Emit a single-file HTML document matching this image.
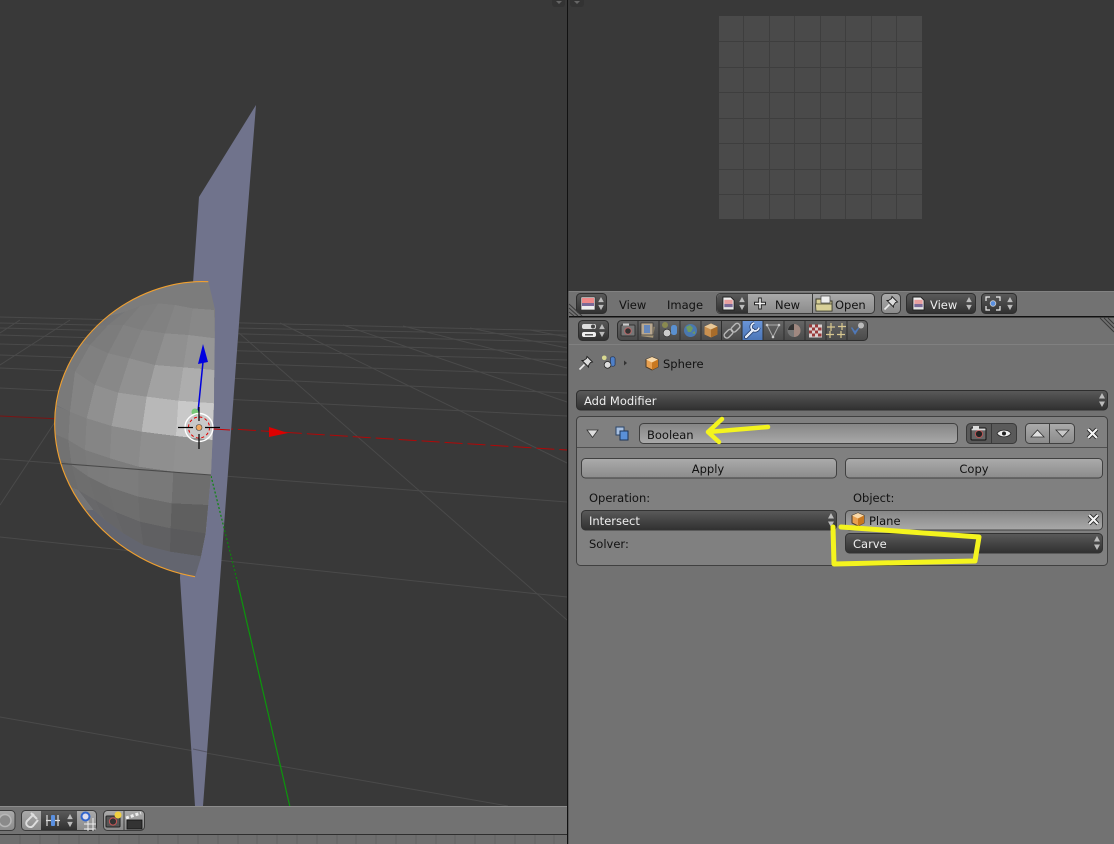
<!DOCTYPE html>
<html><head><meta charset="utf-8"><style>
html,body{margin:0;padding:0;background:#727272;overflow:hidden}
svg{display:block}
text{font-family:"DejaVu Sans","Liberation Sans",sans-serif;font-size:11.5px;fill:#111}
.w{fill:#eee}
</style></head><body>
<svg width="1114" height="844" viewBox="0 0 1114 844" xmlns="http://www.w3.org/2000/svg">
<defs>
<linearGradient id="dk" x1="0" y1="0" x2="0" y2="1"><stop offset="0" stop-color="#5a5a5a"/><stop offset="1" stop-color="#303030"/></linearGradient>
<linearGradient id="lt" x1="0" y1="0" x2="0" y2="1"><stop offset="0" stop-color="#ababab"/><stop offset="1" stop-color="#8b8b8b"/></linearGradient>
<linearGradient id="fld" x1="0" y1="0" x2="0" y2="1"><stop offset="0" stop-color="#858585"/><stop offset="1" stop-color="#a9a9a9"/></linearGradient>
<linearGradient id="tab" x1="0" y1="0" x2="0" y2="1"><stop offset="0" stop-color="#666666"/><stop offset="1" stop-color="#4a4a4a"/></linearGradient>
<linearGradient id="blu" x1="0" y1="0" x2="0" y2="1"><stop offset="0" stop-color="#6a95d8"/><stop offset="1" stop-color="#4b76b8"/></linearGradient>
<radialGradient id="sph" gradientUnits="userSpaceOnUse" cx="520" cy="470" r="480"><stop offset="0" stop-color="#8c8c8c"/><stop offset=".75" stop-color="#7e7e7e"/><stop offset="1" stop-color="#707174"/></radialGradient>
<clipPath id="sc"><path d="M505 35C280 25 44 210 44 460C44 680 230 880 465 920L482 865 497 790 513 615 522 400 525 120Z"/></clipPath>
<symbol id="ud" viewBox="0 0 8 16"><path d="M4 1L7 6.5H1Z M4 15L7 9.5H1Z" fill="#bbb"/></symbol>
<symbol id="img" viewBox="0 0 14 16"><path d="M1 1H9.5L13 4.5V15H1Z" fill="#eee" stroke="#222"/><rect x="2.5" y="4" width="9" height="4.5" fill="#e8a0a0"/><rect x="2.5" y="8.5" width="9" height="3.5" fill="#7a6a98"/><rect x="2.5" y="12" width="9" height="1.5" fill="#ddd"/></symbol>
<symbol id="cube" viewBox="0 0 14 15"><path d="M7 1L13 3.5V11L7 14 1 11V3.5Z" fill="#e8a050" stroke="#4a3a28"/><path d="M7 6.5L1 3.5 7 1 13 3.5Z" fill="#f8d8a8"/><path d="M7 6.5V14L13 11V3.5Z" fill="#c87820"/></symbol>
<symbol id="pin" viewBox="0 0 16 16"><path d="M9 1.5L14.5 7 12.5 7.5 10.5 10.5 10.5 12 4 5.5 5.5 5.5 8.5 3.5Z" fill="#ddd" stroke="#222" stroke-width=".9"/><path d="M6.5 9.5L1.5 14.5" stroke="#eee" stroke-width="1.6"/></symbol>
<symbol id="obd" viewBox="0 0 16 16"><circle cx="3.5" cy="3.5" r="2.5" fill="#d8d890"/><rect x="10" y="2.5" width="5" height="10" rx="2" fill="#4f80c8" stroke="#1c2c4c" stroke-width=".7"/><circle cx="7" cy="11" r="3.6" fill="#ddd" stroke="#222" stroke-width=".8"/></symbol>
<symbol id="x" viewBox="0 0 12 12"><path d="M2 2L10 10M10 2L2 10" stroke="#222" stroke-width="3.6"/><path d="M2 2L10 10M10 2L2 10" stroke="#f4f4f4" stroke-width="2"/></symbol>
</defs>

<rect width="1114" height="844" fill="#727272"/>
<!-- left viewport -->
<rect x="0" y="0" width="567" height="806" fill="#393939"/>
<g stroke="#4a4a4a" stroke-width="1" fill="none">
<path d="M0 317L567 331M0 323L567 335M0 328L567 342M0 335L567 352M0 344L567 360M0 355L567 375M0 368L567 393M0 388L567 416M0 459L567 502M0 537L567 597M0 717L508 806"/>
<path d="M239 333L567 620M280 323L567 463M343 325L567 402M403 326L567 368M470 328L567 348M530 330L567 337M0 365L70 320M0 505L55 422M0 333L20 320"/>
</g>
<path d="M0 416L60 419" stroke="#7a1414" stroke-width="1" fill="none"/>
<path d="M215 428L567 450" stroke="#b00808" stroke-width="1" stroke-dasharray="18 5" fill="none"/>
<path d="M269 427L288 433 269 437Z" fill="#dd0000"/>
<path d="M237 580L290 807" stroke="#0c960c" stroke-width="1.2" fill="none"/>
<path d="M256 105L199 197 193 283 180 578 195 806 203 806 220 580 243 270Z" fill="#70738c"/>
<path d="M193 749L207 752" stroke="#555566" stroke-width="1" fill="none"/>
<path d="M211 476L237 580" stroke="#0c860c" stroke-width="1.2" stroke-dasharray="2 2" fill="none"/>

<!-- sphere -->
<g transform="translate(40 270) scale(.33333)">
<g clip-path="url(#sc)" shape-rendering="crispEdges">
<rect x="30" y="20" width="510" height="920" fill="url(#sph)"/>
<path d="M525 30L522 120 458 115 405 105 355 100 300 108 255 125 200 140 330 40Z" fill="#7c7c7c"/>
<path d="M522 120L525 205 445 195 458 115Z" fill="#888888"/><path d="M458 115L445 195 375 190 405 105Z" fill="#858585"/><path d="M405 105L375 190 305 180 355 100Z" fill="#818181"/><path d="M355 100L305 180 250 165 300 108Z" fill="#7e7e7e"/><path d="M300 108L250 165 205 165 255 125Z" fill="#7a7a7a"/>
<path d="M525 205L523 300 430 292 445 195Z" fill="#969696"/><path d="M445 195L430 292 345 285 375 190Z" fill="#909090"/><path d="M375 190L345 285 268 265 305 180Z" fill="#878787"/><path d="M305 180L268 265 205 250 250 165Z" fill="#828282"/><path d="M250 165L205 250 150 225 205 165Z" fill="#7c7c7c"/><path d="M205 165L150 225 115 215 160 170Z" fill="#767676"/>
<path d="M523 300L522 400 415 392 430 292Z" fill="#adadad"/><path d="M430 292L415 392 320 380 345 285Z" fill="#a2a2a2"/><path d="M345 285L320 380 235 368 268 265Z" fill="#919191"/><path d="M268 265L235 368 165 345 205 250Z" fill="#888888"/><path d="M205 250L165 345 105 305 150 225Z" fill="#808080"/><path d="M150 225L105 305 75 290 115 215Z" fill="#797979"/>
<path d="M522 400L518 510 408 498 415 392Z" fill="#c9c9c9"/><path d="M415 392L408 498 305 485 320 380Z" fill="#b8b8b8"/><path d="M320 380L305 485 215 468 235 368Z" fill="#a0a0a0"/><path d="M235 368L215 468 140 445 165 345Z" fill="#909090"/><path d="M165 345L140 445 90 425 105 305Z" fill="#848484"/><path d="M105 305L90 425 50 405 75 290Z" fill="#7a7a7a"/>
<path d="M518 510L513 615 400 605 408 498Z" fill="#919191"/><path d="M408 498L400 605 295 590 305 485Z" fill="#8f8f8f"/><path d="M305 485L295 590 210 565 215 468Z" fill="#8a8a8a"/><path d="M215 468L210 565 135 540 140 445Z" fill="#858585"/><path d="M140 445L135 540 85 510 90 425Z" fill="#808080"/><path d="M90 425L85 510 40 490 40 405Z" fill="#787878"/>
<path d="M513 615L505 705 395 700 400 605Z" fill="#6e6e6e"/><path d="M400 605L395 700 295 680 295 590Z" fill="#797979"/><path d="M295 590L295 680 205 650 210 565Z" fill="#7c7c7c"/><path d="M210 565L205 650 145 620 135 540Z" fill="#7b7b7b"/><path d="M135 540L145 620 95 585 85 510Z" fill="#797979"/><path d="M85 510L95 585 40 560 40 490Z" fill="#727272"/>
<path d="M505 705L497 790 392 775 395 700Z" fill="#5f5f5f"/><path d="M395 700L392 775 300 755 295 680Z" fill="#6b6b6b"/><path d="M295 680L300 755 225 725 205 650Z" fill="#6e6e6e"/><path d="M205 650L225 725 165 690 145 620Z" fill="#6d6d6d"/><path d="M145 620L165 690 115 660 95 585Z" fill="#6e6e6e"/><path d="M95 585L115 660 60 640 40 560Z" fill="#6c6c6c"/>
<path d="M497 790L482 865 390 845 392 775Z" fill="#5a5a5c"/><path d="M392 775L390 845 310 825 300 755Z" fill="#606062"/><path d="M300 755L310 825 250 790 225 725Z" fill="#646466"/><path d="M225 725L250 790 195 750 165 690Z" fill="#666668"/><path d="M165 690L195 750 160 720 115 660Z" fill="#68686a"/>
<path d="M490 860L465 930 330 900 200 830 130 720 160 720 195 750 250 790 310 825 390 845Z" fill="#63656f"/>
</g>
<path d="M56 580L513 615" stroke="#4a4a4a" stroke-width="3.2" fill="none"/>
<path d="M505 35C280 25 44 210 44 460C44 680 230 880 465 920" fill="none" stroke="#f0a030" stroke-width="3.4"/>
</g>

<!-- gizmo -->
<path d="M198 412L203 362" stroke="#0000dd" stroke-width="1.5" fill="none"/>
<path d="M203 344L198 364 208 362Z" fill="#0000e0"/>
<circle cx="195" cy="412" r="3.5" fill="#78c878"/>
<path d="M213 429L230 430" stroke="#c00" stroke-width="1"/>
<circle cx="199" cy="427.5" r="14" fill="none" stroke="#fff" stroke-width="1.4"/>
<circle cx="199" cy="427.5" r="10.5" fill="none" stroke="#e00000" stroke-width="1" stroke-dasharray="3 2.5"/>
<path d="M178 427.5H193M205 427.5H220M199 407V421M199 434V449" stroke="#000" stroke-width="1.2"/>
<circle cx="199" cy="427.5" r="3" fill="#f0a860" stroke="#444" stroke-width=".6"/>

<!-- bottom bar -->
<rect x="0" y="806" width="567" height="28" fill="#727272"/>
<rect x="0" y="806" width="567" height="1" fill="#8c8c8c"/>
<rect x="0" y="834" width="567" height="1" fill="#2e2e2e"/>
<rect x="0" y="835" width="567" height="9" fill="#6e6e6e"/>
<path d="M20 835v9M40 835v9M59 835v9M79 835v9M99 835v9M119 835v9M139 835v9M158 835v9M178 835v9M198 835v9M218 835v9M238 835v9M257 835v9M277 835v9M297 835v9M317 835v9M337 835v9M356 835v9M376 835v9M396 835v9M416 835v9M436 835v9M455 835v9M475 835v9M495 835v9M515 835v9M535 835v9M554 835v9" stroke="#626262"/>
<rect x="-8" y="810.5" width="23" height="20" rx="4" fill="url(#lt)" stroke="#3c3c3c"/>
<circle cx="5" cy="820.5" r="6" fill="#8a8a8a" stroke="#b8b8b8" stroke-width="1.5"/>
<rect x="21.5" y="810.5" width="75" height="20" rx="4" fill="url(#lt)" stroke="#3c3c3c"/>
<rect x="41" y="811" width="36" height="19" fill="url(#dk)"/>
<path d="M34 814L27 821C24 825 30 829 33 826L38 820M31 813L37 819" fill="none" stroke="#ddd" stroke-width="2"/>
<path d="M47 815v11M58 815v11M46 820.5H60" stroke="#ddd" stroke-width="1.2" fill="none"/><rect x="51" y="815" width="4" height="11" rx="1" fill="#5a90e0"/>
<use href="#ud" x="66" y="813" width="8" height="15"/>
<path d="M84 824H96M84 829H96M88 818V831M93 818V831" stroke="#eee" stroke-width="1" fill="none"/><circle cx="85.5" cy="816.5" r="4" fill="#dde" stroke="#36c" stroke-width="2"/>
<rect x="103.5" y="810.5" width="41" height="20" rx="4" fill="url(#lt)" stroke="#3c3c3c"/>
<path d="M124 811v19" stroke="#3c3c3c"/>
<rect x="106" y="816" width="14" height="11" rx="1" fill="#555" stroke="#222"/><circle cx="113" cy="821.5" r="3.6" fill="#333" stroke="#c55" stroke-width="1"/><circle cx="118" cy="815" r="3.5" fill="#f0d040"/>
<rect x="127" y="820" width="15" height="9" fill="#333" stroke="#111" stroke-width=".8"/><path d="M126 818L141 813" stroke="#eee" stroke-width="3" stroke-dasharray="3 2"/>

<!-- image editor -->
<rect x="568" y="0" width="546" height="291" fill="#393939"/>
<rect x="719" y="16" width="203" height="203" fill="#4a4a4a"/>
<path d="M743.5 16v203M769.5 16v203M794.5 16v203M820.5 16v203M845.5 16v203M871.5 16v203M896.5 16v203M719 41.5h203M719 67.5h203M719 92.5h203M719 118.5h203M719 143.5h203M719 169.5h203M719 194.5h203" stroke="#3e3e3e" stroke-width="1" fill="none"/>

<!-- corner widgets -->
<rect x="552" y="-4" width="13" height="11" rx="3" fill="#333"/>
<rect x="570" y="-4" width="14" height="11" rx="3" fill="#333"/>
<path d="M556 1h6l-3 3z M574 1h6l-3 3z" fill="#666"/>

<!-- separators -->
<rect x="567" y="0" width="1" height="844" fill="#111"/>
<rect x="568" y="291" width="1" height="553" fill="#5a5a5a"/>

<!-- image header -->
<rect x="569" y="291" width="545" height="25" fill="#727272"/>
<rect x="569" y="291" width="545" height="1" fill="#828282"/>
<rect x="569" y="316" width="545" height="1.5" fill="#111"/>
<rect x="576.5" y="293.5" width="30" height="20" rx="4" fill="url(#dk)" stroke="#2e2e2e"/>
<rect x="581" y="297" width="14" height="13" fill="#eee" stroke="#333" stroke-width=".7"/><rect x="582" y="298" width="12" height="5" fill="#e88"/><rect x="582" y="303" width="12" height="3" fill="#7a6a98"/>
<use href="#ud" x="597" y="296" width="8" height="15"/>
<text x="619" y="309">View</text>
<text x="667" y="309">Image</text>
<rect x="716.5" y="293.5" width="158" height="20" rx="4" fill="url(#lt)" stroke="#3a3a3a"/>
<path d="M748 294H720.5A4 4 0 0 0 717 298V309A4 4 0 0 0 720.5 313H748Z" fill="url(#dk)"/>
<path d="M812.5 294v19" stroke="#3a3a3a"/>
<use href="#img" x="722" y="296" width="13" height="15"/>
<use href="#ud" x="738" y="296" width="8" height="15"/>
<path d="M754 303.5H766M760 297.5V309.5" stroke="#222" stroke-width="3.5"/><path d="M755 303.5H765M760 298.5V308.5" stroke="#f0f0f0" stroke-width="1.6"/>
<text x="775" y="309">New</text>
<path d="M816 299h5l1 2h10v10h-16z" fill="#d8d098" stroke="#3a3a2a"/><rect x="821" y="296" width="9" height="7" fill="#eee" stroke="#444" stroke-width=".7"/><path d="M815.5 304H832V311H816Z" fill="#d8d098" stroke="#3a3a2a" stroke-width=".8"/>
<text x="835" y="309">Open</text>
<rect x="881.5" y="293.5" width="19" height="20" rx="4" fill="url(#lt)" stroke="#3a3a3a"/>
<use href="#pin" x="883" y="295" width="16" height="16"/>
<rect x="906.5" y="293.5" width="69" height="20" rx="4" fill="url(#dk)" stroke="#2e2e2e"/>
<use href="#img" x="912" y="296" width="13" height="15"/>
<text x="930" y="309" class="w">View</text>
<use href="#ud" x="965" y="296" width="8" height="15"/>
<rect x="981.5" y="293.5" width="35" height="20" rx="4" fill="url(#dk)" stroke="#2e2e2e"/>
<path d="M986 301v-4h4M996 297h4v4M1000 306v4h-4M990 310h-4v-4" stroke="#eee" fill="none" stroke-width="1.2"/><circle cx="993" cy="303.5" r="2.8" fill="#5a90e0" stroke="#ccc" stroke-width=".8"/>
<use href="#ud" x="1006" y="296" width="8" height="15"/>
<path d="M569 304L582 316M569 308L578 316M569 312L574 316" stroke="#3a3a3a" stroke-width="1" fill="none"/>

<!-- properties header -->
<rect x="569" y="318" width="545" height="26" fill="#727272"/>
<rect x="569" y="344" width="545" height="1" fill="#808080"/>
<path d="M1104 318L1114 328M1108 318L1114 324M1100 318L1114 332" stroke="#3a3a3a" stroke-width="1" fill="none"/>
<rect x="578.5" y="320.5" width="30" height="20" rx="4" fill="url(#dk)" stroke="#2e2e2e"/>
<rect x="582" y="324" width="14" height="5" rx="2" fill="#ddd"/><rect x="582" y="332" width="14" height="5" rx="2" fill="#eee"/><circle cx="593" cy="326.5" r="2" fill="#444"/><rect x="585" y="334" width="8" height="1.5" fill="#555"/>
<use href="#ud" x="598" y="323" width="8" height="15"/>
<rect x="617.5" y="320.5" width="250" height="20" rx="4" fill="url(#tab)" stroke="#2e2e2e"/>
<rect x="742" y="321" width="21" height="19" fill="url(#blu)"/>
<path d="M638 321v19M659 321v19M680 321v19M701 321v19M721.5 321v19M742 321v19M763 321v19M784 321v19M805 321v19M826 321v19M847 321v19" stroke="#2e2e2e"/>
<!-- tab icons -->
<rect x="621" y="325" width="14" height="11" rx="1" fill="#777" stroke="#333"/><circle cx="628" cy="331" r="3.3" fill="#333" stroke="#b66" stroke-width="1"/><rect x="623" y="323.5" width="6" height="2" fill="#ccc"/>
<rect x="642" y="326" width="12" height="11" fill="#a89878" transform="rotate(8 648 331)"/><rect x="641" y="323" width="12" height="12" fill="#b8a890" stroke="#333" stroke-width=".7"/><rect x="644" y="325" width="6" height="8" fill="#6688bb"/>
<circle cx="665" cy="325" r="3" fill="#8a8a50"/><rect x="671" y="325" width="6" height="10" rx="2.5" fill="#5a90d0"/><circle cx="667" cy="333" r="3.8" fill="#ccc" stroke="#222" stroke-width=".6"/>
<circle cx="690.5" cy="330.5" r="6.5" fill="#4a78b0"/><path d="M686 327l4-2 3 3-2 4-3 0zM692 333l3-2v3z" fill="#6f9a60"/>
<path d="M711 323.5L717.5 326.5V334.5L711 337.5 704.5 334.5V326.5Z" fill="#c89050"/><path d="M711 329.5L704.5 326.5 711 323.5 717.5 326.5Z" fill="#e8c898"/><path d="M711 329.5V337.5L717.5 334.5V326.5Z" fill="#a86c2a"/>
<rect x="723.5" y="331" width="10" height="5.5" rx="2.7" transform="rotate(-45 728.5 333.7)" fill="none" stroke="#b8b8b8" stroke-width="1.4"/><rect x="730.5" y="325" width="10" height="5.5" rx="2.7" transform="rotate(-45 735.5 327.7)" fill="none" stroke="#b8b8b8" stroke-width="1.4"/>
<path d="M746 337L753 330" stroke="#1e3560" stroke-width="4" stroke-linecap="round"/>
<path d="M754.3 323A4 4 0 1 0 759 327.7" fill="none" stroke="#1e3560" stroke-width="3.2"/>
<path d="M746 337L753 330" stroke="#e4ecfa" stroke-width="2.4" stroke-linecap="round"/>
<path d="M754.3 323A4 4 0 1 0 759 327.7" fill="none" stroke="#e4ecfa" stroke-width="1.8"/>
<path d="M767 325H779L773 337Z" fill="none" stroke="#aaa" stroke-width="1"/><circle cx="767" cy="325" r="1.3" fill="#ccc"/><circle cx="779" cy="325" r="1.3" fill="#ccc"/><circle cx="773" cy="337" r="1.3" fill="#ccc"/>
<circle cx="794" cy="330.5" r="6.5" fill="#777"/><path d="M794 324a6.5 6.5 0 0 1 0 13z" fill="#a08880"/><path d="M788 330a6.5 6.5 0 0 1 6-6v6z" fill="#333"/>
<rect x="809" y="324.5" width="13" height="13" fill="#d8d0d0"/><path d="M809 324.5h3v3h-3zM815 324.5h3v3h-3zM812 327.5h3v3h-3zM818 327.5h3.5v3h-3.5zM809 330.5h3v3h-3zM815 330.5h3v3h-3zM812 333.5h3v3h-3zM818 333.5h3.5v3h-3.5z" fill="#9a3a3a"/>
<path d="M831 323v8M827 327h8M842 323v7M838 326.5h8M830 331v7M826 334.5h8M841 331v7M837 334.5h8" stroke="#d8c890" stroke-width="1.2"/>
<path d="M851 328l4 7 5-8-1 0-4 4-3-4z" fill="#4f78b8"/><circle cx="861" cy="325.5" r="3" fill="#bbb"/>

<!-- breadcrumbs -->
<use href="#pin" x="578" y="355" width="16" height="16"/>
<use href="#obd" x="601" y="354" width="15" height="16"/>
<path d="M624 360.5l3 2.5-3 2.5z" fill="#333"/>
<use href="#cube" x="645" y="356" width="14" height="15"/>
<text x="663" y="368">Sphere</text>

<!-- add modifier -->
<rect x="576.5" y="390.5" width="531" height="19.5" rx="4" fill="url(#dk)" stroke="#2e2e2e"/>
<text x="584" y="405" class="w">Add Modifier</text>
<use href="#ud" x="1098" y="392" width="8" height="16"/>

<!-- modifier panel -->
<rect x="576.5" y="416.5" width="531" height="149" rx="4" fill="#808080" stroke="#404040"/>
<path d="M577 447.5H1107" stroke="#505050"/>
<path d="M587 430H598L592.5 437.5Z" fill="#ddd" stroke="#333" stroke-width=".8"/>
<rect x="616" y="427" width="8" height="8" fill="#a8c0e0" stroke="#2a4468"/><rect x="620" y="431" width="8" height="9" fill="#5a90d8" stroke="#1c3458"/>
<rect x="639.5" y="423.5" width="318" height="20" rx="4" fill="url(#fld)" stroke="#404040"/>
<text x="647" y="439">Boolean</text>
<rect x="966.5" y="423.5" width="50" height="20" rx="4" fill="#5a5a5a" stroke="#3a3a3a"/>
<path d="M991.5 424v19" stroke="#3a3a3a"/>
<rect x="971" y="428" width="15" height="12" rx="1" fill="#666" stroke="#111"/><rect x="973" y="426" width="6" height="2.5" fill="#ddd"/><circle cx="979" cy="434" r="3.6" fill="#222" stroke="#b55" stroke-width="1"/><rect x="971.5" y="428.5" width="14" height="1.8" fill="#ddd"/>
<path d="M997 433.5C1000 429 1008 429 1011 433.5 1008 438 1000 438 997 433.5Z" fill="#eee" stroke="#222" stroke-width=".7"/><circle cx="1004" cy="433.5" r="2" fill="#222"/>
<rect x="1025.5" y="423.5" width="49" height="20" rx="4" fill="url(#lt)" stroke="#404040"/>
<path d="M1049.5 424v19" stroke="#404040"/>
<path d="M1031 437L1037.5 430 1044 437Z" fill="#e0e0e0" stroke="#333" stroke-width=".8"/>
<path d="M1056 430H1069L1062.5 437Z" fill="#c8c8c8" stroke="#333" stroke-width=".8"/>
<use href="#x" x="1086" y="427" width="13" height="13"/>

<rect x="581.5" y="458.5" width="255" height="19.5" rx="4" fill="url(#lt)" stroke="#404040"/>
<text x="708" y="473" text-anchor="middle">Apply</text>
<rect x="845.5" y="458.5" width="257" height="19.5" rx="4" fill="url(#lt)" stroke="#404040"/>
<text x="974" y="473" text-anchor="middle">Copy</text>
<text x="589" y="502">Operation:</text>
<text x="853" y="502">Object:</text>
<rect x="581.5" y="510.5" width="255" height="19.5" rx="4" fill="url(#dk)" stroke="#333"/>
<text x="589" y="525" class="w">Intersect</text>
<use href="#ud" x="827" y="512" width="8" height="16"/>
<rect x="845.5" y="510.5" width="257" height="19.5" rx="4" fill="url(#fld)" stroke="#404040"/>
<use href="#cube" x="851" y="512" width="14" height="15"/>
<text x="869" y="525">Plane</text>
<use href="#x" x="1087" y="513" width="13" height="13"/>
<text x="589" y="548">Solver:</text>
<rect x="845.5" y="533.5" width="257" height="19.5" rx="4" fill="url(#dk)" stroke="#333"/>
<text x="853" y="548" class="w">Carve</text>
<use href="#ud" x="1093" y="535" width="8" height="16"/>

<!-- yellow annotations -->
<path d="M768 427L708 432M722 419L708 432 719 442" fill="none" stroke="#f4f41e" stroke-width="4.5" stroke-linejoin="round" stroke-linecap="round"/>
<path d="M841 527L979 537 975 561 834 564 833 527" fill="none" stroke="#f4f41e" stroke-width="5" stroke-linejoin="round" stroke-linecap="round"/>
</svg>
</body></html>
